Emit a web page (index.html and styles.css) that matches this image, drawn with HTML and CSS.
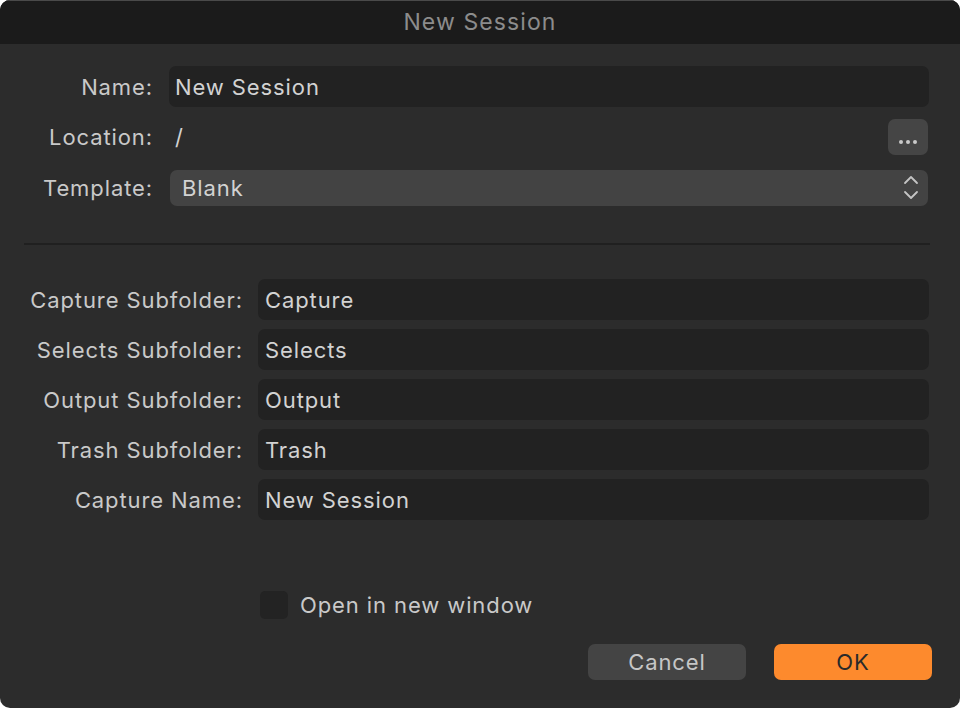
FILE: index.html
```html
<!DOCTYPE html>
<html>
<head>
<meta charset="utf-8">
<link rel="stylesheet" href="styles.css">
</head>
<body>
<div class="window">
  <div class="titlebar">New Session</div>
  <div class="content">
    <div class="top-grid">
      <label class="lbl">Name:</label>
      <div class="field name-field">New Session</div>

      <label class="lbl loc-lbl">Location:</label>
      <div class="loc-row">
        <span class="loc-path">/</span>
        <div class="btn-dots">
          <svg width="18" height="4" viewBox="0 0 18 4"><circle cx="2" cy="2" r="2" fill="#c9c9c9"/><circle cx="9" cy="2" r="2" fill="#c9c9c9"/><circle cx="16" cy="2" r="2" fill="#c9c9c9"/></svg>
        </div>
      </div>

      <label class="lbl tpl-lbl">Template:</label>
      <div class="popup">
        <span>Blank</span>
        <svg class="chev" width="16" height="26" viewBox="0 0 16 26"><path d="M2 8 L8 2 L14 8" fill="none" stroke="#c4c4c4" stroke-width="1.8" stroke-linecap="round" stroke-linejoin="round"/><path d="M2 17 L8 23 L14 17" fill="none" stroke="#c4c4c4" stroke-width="1.8" stroke-linecap="round" stroke-linejoin="round"/></svg>
      </div>
    </div>

    <div class="separator"></div>

    <div class="sub-grid">
      <label class="lbl">Capture Subfolder:</label>
      <div class="field">Capture</div>
      <label class="lbl">Selects Subfolder:</label>
      <div class="field">Selects</div>
      <label class="lbl">Output Subfolder:</label>
      <div class="field">Output</div>
      <label class="lbl">Trash Subfolder:</label>
      <div class="field">Trash</div>
      <label class="lbl">Capture Name:</label>
      <div class="field">New Session</div>
    </div>

    <div class="check-row">
      <span class="checkbox"></span>
      <span class="check-text">Open in new window</span>
    </div>

    <div class="buttons">
      <button class="btn cancel">Cancel</button>
      <button class="btn ok">OK</button>
    </div>
  </div>
</div>
</body>
</html>
```

FILE: styles.css
```css
* { box-sizing: border-box; }
html, body {
  margin: 0;
  padding: 0;
  background: #ffffff;
}
body {
  font-family: Inter, "Liberation Sans", sans-serif;
  font-size: 22px;
  letter-spacing: 0.9px;
  color: #cfcfcf;
}
.window {
  width: 960px;
  height: 708px;
  border-radius: 10px;
  overflow: hidden;
  background: #2c2c2c;
  display: flex;
  flex-direction: column;
}
.titlebar {
  height: 44px;
  flex: none;
  background: #1b1b1b;
  border-top: 1px solid #4a4a4a;
  color: #8c8c8c;
  font-size: 23px;
  letter-spacing: 1.1px;
  text-align: center;
  line-height: 42px;
}
.content {
  flex: 1;
  display: flex;
  flex-direction: column;
  padding: 22px 31px 28px 0;
}
.lbl {
  text-align: right;
  color: #c9c9c9;
  white-space: nowrap;
}
.top-grid {
  display: grid;
  grid-template-columns: 153px 1fr;
  column-gap: 16px;
  align-items: center;
}
.field {
  height: 41px;
  background: #222222;
  border-radius: 7px;
  padding-left: 7px;
  display: flex;
  align-items: center;
  color: #d2d2d2;
}
.name-field { padding-left: 6px; }
.loc-lbl, .loc-row { margin-top: 12px; }
.loc-row {
  display: flex;
  align-items: center;
  justify-content: space-between;
  height: 36px;
  padding-left: 6px;
}
.loc-path { color: #d2d2d2; }
.btn-dots {
  width: 40px;
  height: 36px;
  margin-right: 1px;
  background: #454545;
  border-radius: 7px;
  display: flex;
  align-items: center;
  justify-content: center;
  padding-top: 10px;
}
.tpl-lbl, .popup { margin-top: 15px; }
.popup {
  height: 36px;
  margin-left: 1px;
  margin-right: 1px;
  background: #434343;
  border-radius: 7px;
  display: flex;
  align-items: center;
  justify-content: space-between;
  padding: 0 9px 0 12px;
  color: #d2d2d2;
}
.chev { display: block; }
.separator {
  height: 2px;
  background: #202020;
  margin: 37px 0 0 24px;
  width: 906px;
}
.sub-grid {
  margin-top: 34px;
  display: grid;
  grid-template-columns: 243px 1fr;
  column-gap: 15px;
  row-gap: 9px;
  align-items: center;
}
.check-row {
  margin-top: 71px;
  margin-left: 260px;
  display: flex;
  align-items: center;
  gap: 12px;
}
.checkbox {
  width: 28px;
  height: 28px;
  border-radius: 5px;
  background: #232323;
  flex: none;
}
.check-text { color: #c9c9c9; }
.buttons {
  margin-top: auto;
  display: flex;
  justify-content: flex-end;
  gap: 28px;
  margin-right: -3px;
}
.btn {
  width: 158px;
  height: 36px;
  border: none;
  border-radius: 7px;
  font-family: Inter, "Liberation Sans", sans-serif;
  font-size: 22px;
  letter-spacing: 0.9px;
  padding: 0;
}
.cancel {
  background: #444444;
  color: #c6c6c6;
}
.ok {
  background: #fd8a2d;
  color: #2a2a2a;
}
```
